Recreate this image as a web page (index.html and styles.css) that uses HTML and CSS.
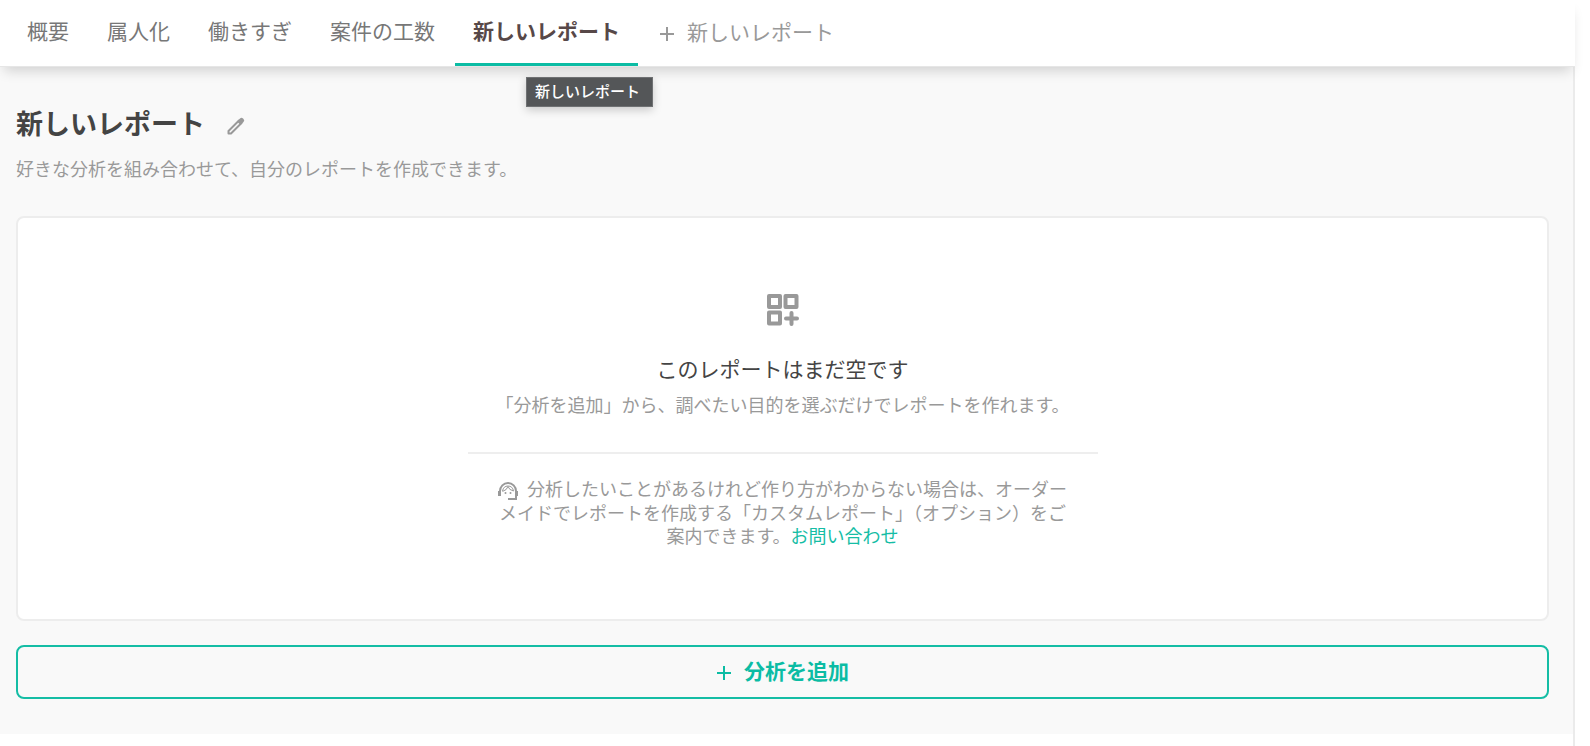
FILE: index.html
```html
<!DOCTYPE html>
<html lang="ja">
<head>
  <meta charset="UTF-8">
  <meta name="viewport" content="width=device-width, initial-scale=1.0">
  <title>新しいレポート</title>
  <link rel="stylesheet" href="styles.css">
</head>
<body>
  <div class="page">
    <nav class="tabs">
      <a href="#" class="tab">概要</a>
      <a href="#" class="tab">属人化</a>
      <a href="#" class="tab">働きすぎ</a>
      <a href="#" class="tab">案件の工数</a>
      <a href="#" class="tab active">新しいレポート<span class="tooltip">新しいレポート</span></a>
      <button type="button" class="new-tab">
        <svg class="plus" viewBox="0 0 16 16"><path d="M8 1v14M1 8h14"/></svg>
        新しいレポート
      </button>
    </nav>

    <main class="content">
      <div class="title-row">
        <h1>新しいレポート</h1>
        <button type="button" class="edit" aria-label="編集">
          <svg viewBox="0 0 18 18">
            <path class="pencil-body" d="M1.500 14 12 3.500 14.500 6 4 16.500H1.500z"/>
            <path class="pencil-end" d="M10 4.500 13 1.500q1.500-1.500 3 0l.5.5q1.500 1.500 0 3L13.500 8z"/>
          </svg>
        </button>
      </div>
      <p class="description">好きな分析を組み合わせて、自分のレポートを作成できます。</p>

      <section class="empty-card">
        <svg class="widget-icon" viewBox="0 0 32 32">
          <rect x="2" y="2" width="11" height="11"/>
          <rect x="18.500" y="2" width="11" height="11"/>
          <rect x="2" y="18.500" width="11" height="11"/>
          <path d="M24.500 19v11M19 24.500h11"/>
        </svg>
        <h2>このレポートはまだ空です</h2>
        <p>「分析を追加」から、調べたい目的を選ぶだけでレポートを作れます。</p>
        <div class="help">
          <svg class="agent-icon" viewBox="0 0 20 20">
            <path class="headset" d="M2 14v-4a8 8 0 0 1 16 0v8h-8"/>
            <path class="ears" d="M1.500 10v5M18.500 10v5"/>
            <path class="hair" d="M4.500 10.500Q9 9 10 5.500q1 3.500 5.500 4.500M4.500 10Q5.500 5 10 5t5.500 5"/>
            <circle cx="7.500" cy="12" r="1"/>
            <circle cx="12.500" cy="12" r="1"/>
          </svg>分析したいことがあるけれど作り方がわからない場合は、オーダーメイドでレポートを作成する「カスタムレポート」（オプション）をご案内できます。<a href="#">お問い合わせ</a>
        </div>
      </section>

      <button type="button" class="add-button">
        <svg class="plus" viewBox="0 0 16 16"><path d="M8 1v14M1 8h14"/></svg>
        分析を追加
      </button>
    </main>
  </div>
</body>
</html>
```
FILE: styles.css
```css
* {
  box-sizing: border-box;
}

body {
  margin: 0;
  background-color: #fff;
  color: #444;
  font-family: "Noto Sans CJK JP", sans-serif;
}

h1, h2, p {
  margin: 0;
}

button {
  padding: 0;
  border: none;
  background: none;
  font-family: inherit;
  cursor: pointer;
}

a {
  color: #15bda5;
  text-decoration: none;
}

.page {
  min-height: 100vh;
  margin-right: 15px;
  border-right: 2px solid #ebebeb;
}

/* タブ */
.tabs {
  position: relative;
  display: flex;
  gap: 2px;
  height: 67px;
  margin-right: -2px;
  padding-left: 9px;
  border-bottom: 1px solid #e6e6e6;
  background-color: #fff;
  box-shadow: 0 8px 12px -4px rgba(0, 0, 0, 0.16);
}

.tab {
  position: relative;
  padding: 0 18px;
  border-bottom: 3px solid transparent;
  color: #777;
  font-size: 21px;
  line-height: 60px;
  white-space: nowrap;
}

.tab.active {
  border-bottom-color: #0bbca4;
  color: #574848;
  font-weight: 700;
}

.new-tab {
  display: flex;
  align-items: center;
  gap: 12px;
  padding: 0 19px 4px;
  color: #999;
  font-size: 21px;
}

.plus {
  width: 16px;
  height: 16px;
  margin-top: 6px;
  fill: none;
  stroke: currentColor;
  stroke-width: 2;
}

.tooltip {
  position: absolute;
  top: 77px;
  left: 71px;
  padding: 0 12px 2px 8px;
  border: 1px solid #6f7173;
  background-color: #545658;
  color: #fff;
  font-size: 15px;
  font-weight: 500;
  line-height: 26px;
  box-shadow: 0 3px 10px rgba(0, 0, 0, 0.2);
}

/* レポート */
.content {
  padding: 35px 24px 35px 16px;
  background-color: #f9f9f9;
}

.title-row {
  display: flex;
  align-items: center;
  gap: 22px;
}

.title-row h1 {
  font-size: 27px;
  font-weight: 700;
  line-height: 42px;
}

.edit {
  display: flex;
  padding-top: 6px;
}

.edit svg {
  width: 18px;
  height: 18px;
}

.pencil-body {
  fill: none;
  stroke: #999;
  stroke-width: 2;
  stroke-linejoin: round;
}

.pencil-end {
  fill: #999;
}

.description {
  margin-top: 12px;
  color: #999;
  font-size: 18px;
  line-height: 24px;
}

.empty-card {
  display: flex;
  flex-direction: column;
  align-items: center;
  margin-top: 36px;
  padding: 76px 24px 72px;
  border: 2px solid #ededed;
  border-radius: 8px;
  background-color: #fff;
  color: #999;
  font-size: 18px;
  line-height: 23px;
  text-align: center;
}

.widget-icon {
  width: 32px;
  height: 32px;
  fill: none;
  stroke: #999;
  stroke-width: 4;
  stroke-linejoin: round;
  stroke-linecap: round;
}

.empty-card h2 {
  margin: 26px 0 9px;
  color: #444;
  font-size: 21px;
  font-weight: 400;
  line-height: 32px;
}

.help {
  width: 100%;
  max-width: 630px;
  margin-top: 36px;
  padding: 23px 30px 0;
  border-top: 2px solid #eee;
}

.help svg {
  width: 20px;
  height: 20px;
  margin-right: 9px;
  vertical-align: -5px;
}

.agent-icon {
  fill: none;
  stroke: #999;
  stroke-width: 2;
}

.agent-icon .ears {
  stroke-width: 3;
}

.agent-icon .hair {
  stroke-width: 1;
}

.agent-icon circle {
  fill: #999;
  stroke: none;
}

.add-button {
  display: flex;
  justify-content: center;
  align-items: center;
  gap: 12px;
  width: 100%;
  height: 54px;
  margin-top: 24px;
  padding-bottom: 4px;
  border: 2px solid #15bda5;
  border-radius: 8px;
  color: #0bbca4;
  font-size: 21px;
  font-weight: 700;
}
```
